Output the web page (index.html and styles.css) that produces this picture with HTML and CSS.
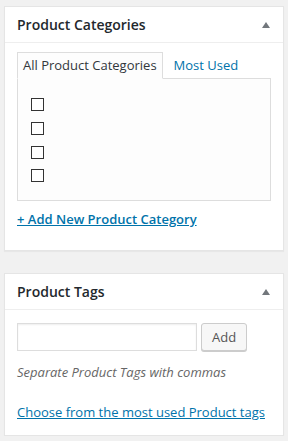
FILE: index.html
```html
<!DOCTYPE html>
<html lang="en">
<head>
    <meta charset="UTF-8">
    <meta name="viewport" content="width=device-width, initial-scale=1.0">
    <title>Product boxes</title>
    <link rel="stylesheet" href="styles.css">
</head>
<body>
    <div class="postbox">
        <h3 class="hndle">
            <span>Product Categories</span>
            <span class="toggle-arrow"></span>
        </h3>
        <div class="inside">
            <ul class="category-tabs">
                <li class="tab active">All Product Categories</li>
                <li class="tab"><a href="#">Most Used</a></li>
            </ul>
            <div class="tabs-panel">
                <ul class="checklist">
                    <li><input type="checkbox"></li>
                    <li><input type="checkbox"></li>
                    <li><input type="checkbox"></li>
                    <li><input type="checkbox"></li>
                </ul>
            </div>
            <p class="add-new"><a href="#">+ Add New Product Category</a></p>
        </div>
    </div>

    <div class="postbox">
        <h3 class="hndle">
            <span>Product Tags</span>
            <span class="toggle-arrow"></span>
        </h3>
        <div class="inside tags-inside">
            <div class="tag-add">
                <input type="text" class="tag-input">
                <button class="button">Add</button>
            </div>
            <p class="howto">Separate Product Tags with commas</p>
            <p class="tag-cloud"><a href="#">Choose from the most used Product tags</a></p>
        </div>
    </div>
</body>
</html>
```

FILE: styles.css
```css
body {
    margin: 0;
    padding-top: 6px;
    background: #f1f1f1;
    font-family: "Open Sans", "Liberation Sans", sans-serif;
    font-size: 13px;
    color: #444;
}
a {
    color: #0073aa;
}
.postbox {
    margin: 0 4px;
    background: #fff;
    border: 1px solid #e5e5e5;
    box-shadow: 0 1px 1px rgba(0, 0, 0, 0.04);
}
.postbox + .postbox {
    margin-top: 22px;
}
.hndle {
    display: flex;
    align-items: center;
    justify-content: space-between;
    margin: 0;
    padding: 8px 12px;
    font-size: 14px;
    font-weight: 600;
    line-height: 19px;
    color: #23282d;
    border-bottom: 1px solid #eee;
}
.toggle-arrow {
    width: 0;
    height: 0;
    margin-right: 1px;
    border-left: 4px solid transparent;
    border-right: 4px solid transparent;
    border-bottom: 6px solid #72777c;
}
.inside {
    padding: 9px 12px 22px;
}
.category-tabs {
    display: flex;
    align-items: flex-start;
    gap: 5px;
    margin: 0;
    padding: 0;
    list-style: none;
    line-height: 18px;
}
.tab {
    padding: 3px 5px 4px;
    border: 1px solid transparent;
    border-bottom: none;
}
.tab a {
    text-decoration: none;
}
.tab.active {
    position: relative;
    margin-bottom: -1px;
    background: #fdfdfd;
    border-color: #ddd;
    border-bottom: 1px solid #fdfdfd;
    color: #32373c;
}
.tabs-panel {
    background: #fdfdfd;
    border: 1px solid #ddd;
    padding: 0 13px;
}
.checklist {
    margin: 14px 0 12.5px;
    padding: 0;
    list-style: none;
}
.checklist li {
    display: flex;
    align-items: center;
    height: 23.67px;
}
.checklist input {
    appearance: none;
    width: 13px;
    height: 13px;
    margin: 0;
    background: #fff;
    border: 1px solid #333;
}
.add-new {
    margin: 9px 0 0;
    font-weight: 600;
    line-height: 18px;
}
.tags-inside {
    padding-bottom: 14px;
}
.tag-add {
    display: flex;
    gap: 4px;
    margin-top: 4px;
}
.tag-input {
    width: 180px;
    height: 28px;
    box-sizing: border-box;
    margin: 0;
    border: 1px solid #ddd;
    box-shadow: inset 0 1px 2px rgba(0, 0, 0, 0.07);
    background: #fff;
}
.button {
    height: 28px;
    padding: 0 10px 1px;
    font-family: inherit;
    font-size: 13px;
    color: #555;
    background: #f7f7f7;
    border: 1px solid #ccc;
    border-radius: 3px;
    box-shadow: 0 1px 0 #ccc;
}
.howto {
    margin: 12px 0 0;
    font-style: italic;
    line-height: 18px;
    color: #666;
}
.tag-cloud {
    margin: 22px 0 0;
    line-height: 18px;
}
```
